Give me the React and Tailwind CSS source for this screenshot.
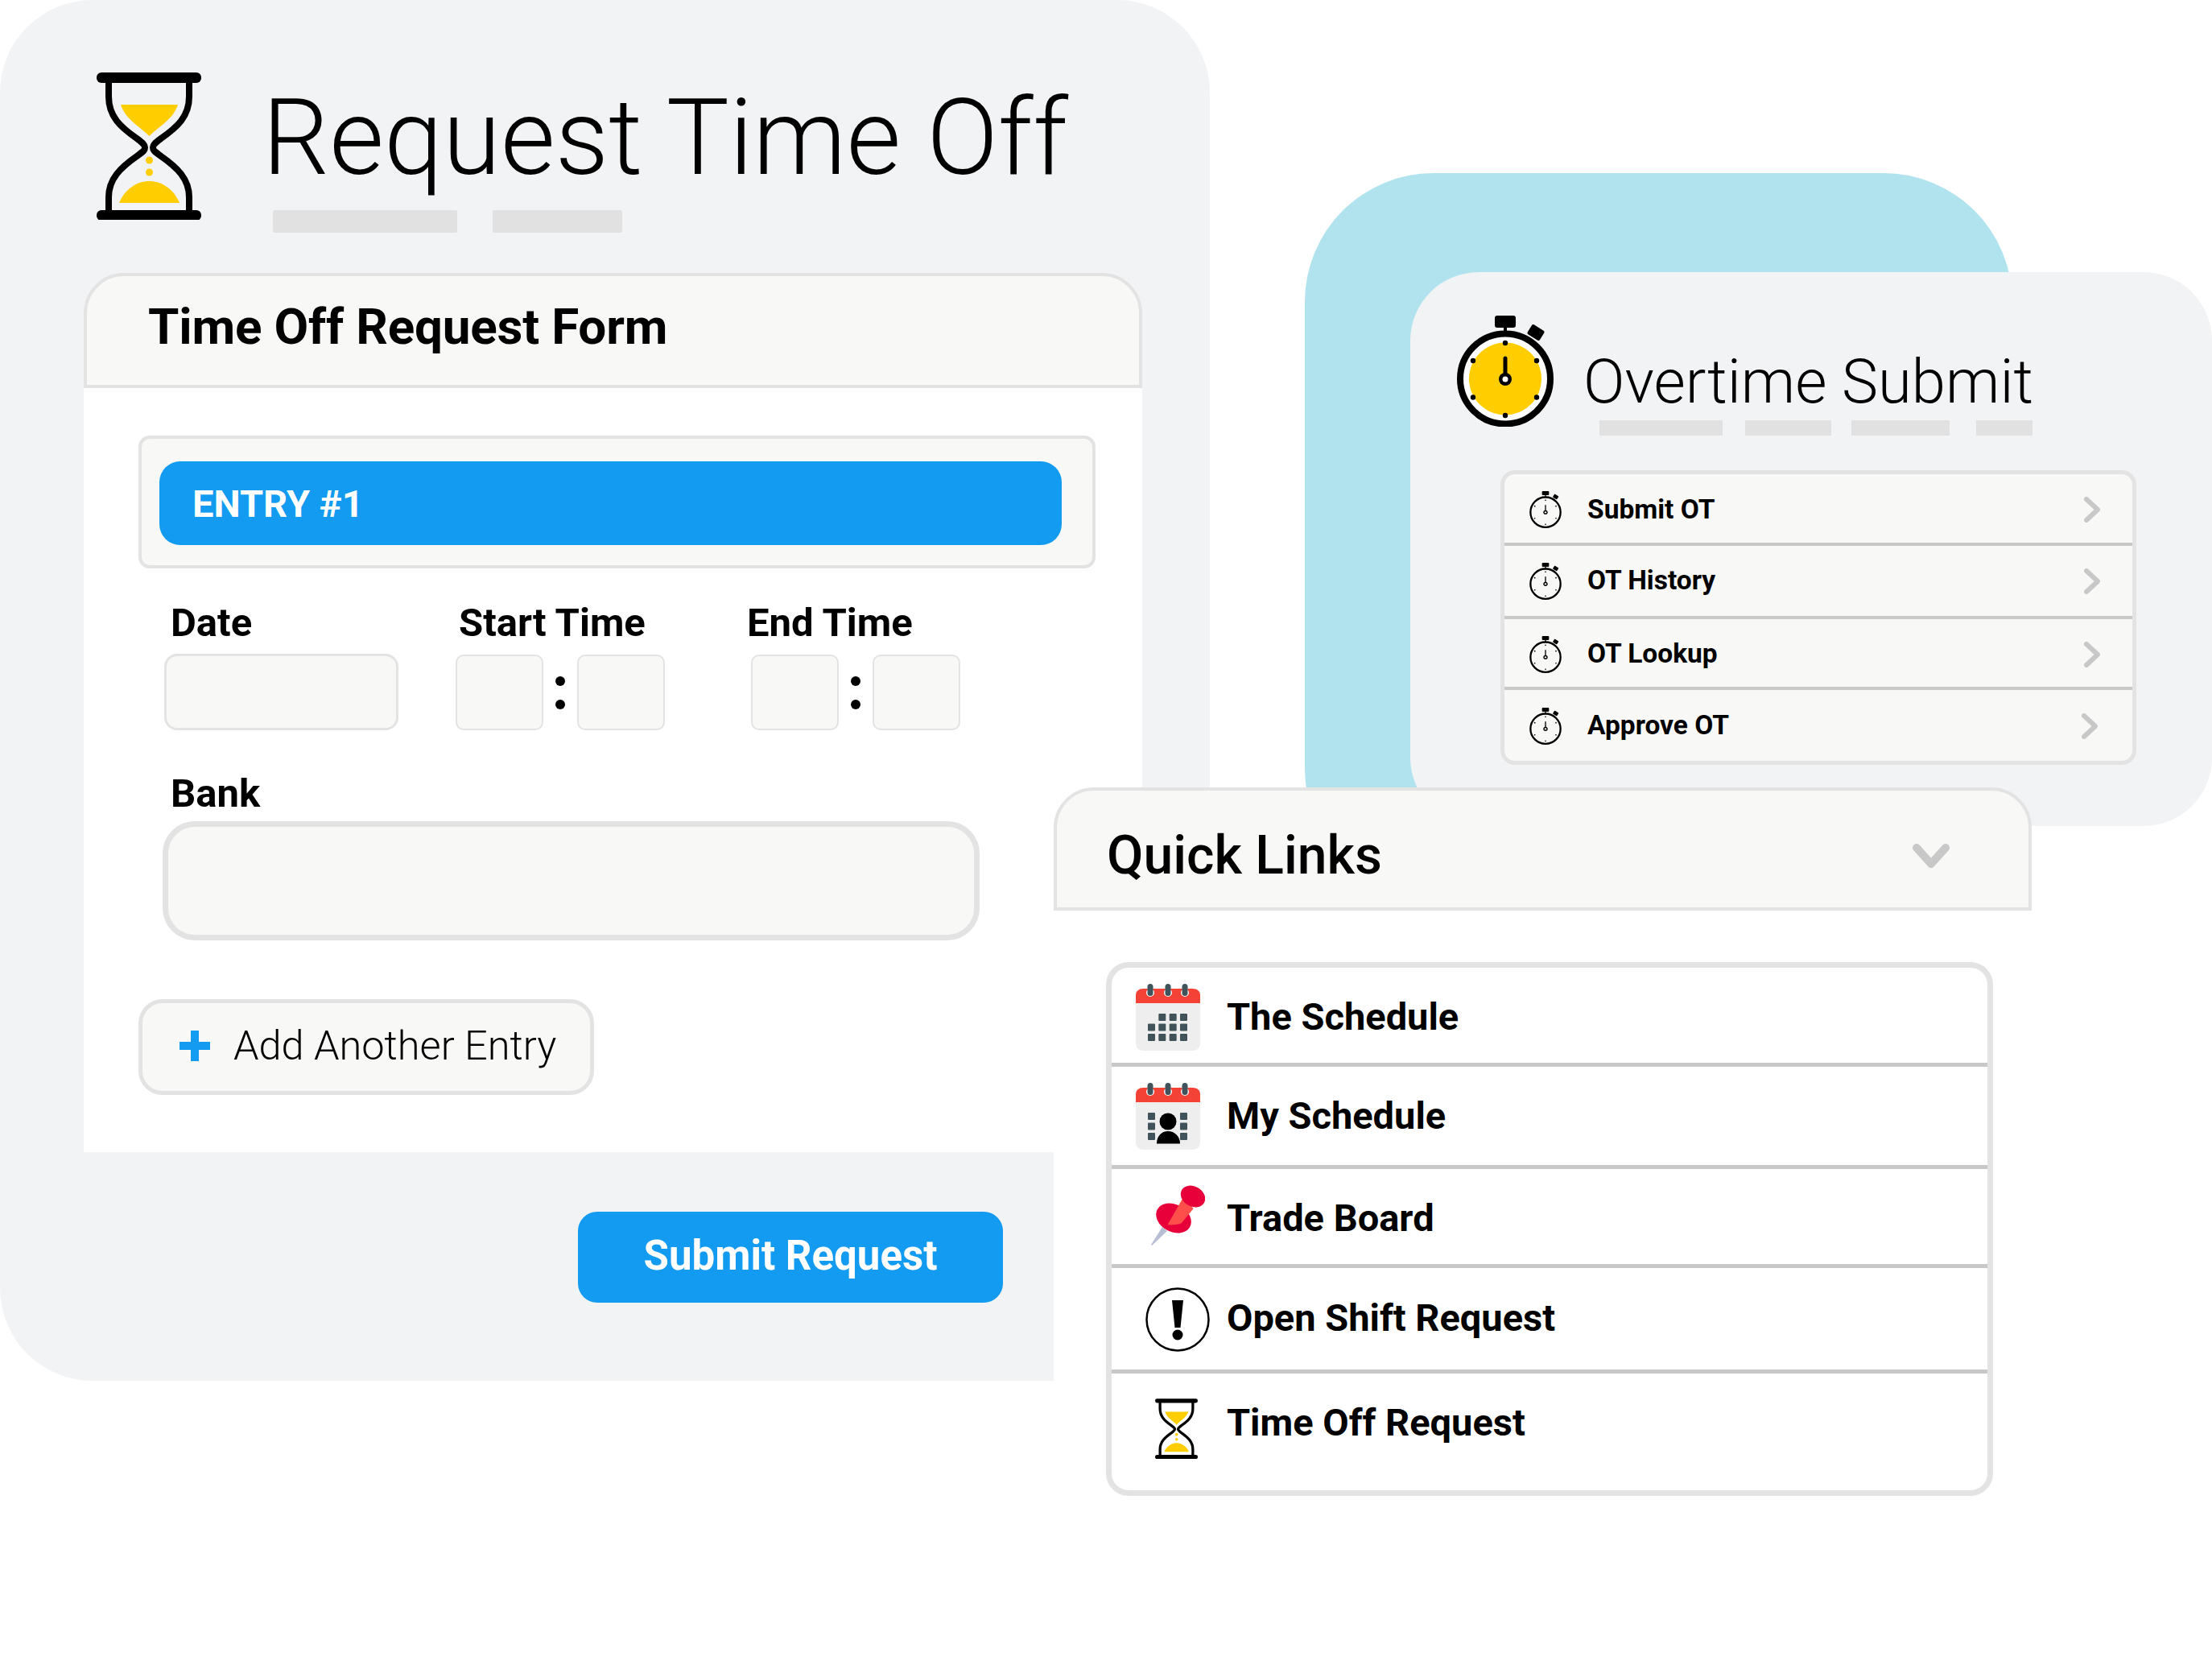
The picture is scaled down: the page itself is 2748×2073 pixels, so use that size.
import React from 'react';

const font = { fontFamily: 'Roboto, sans-serif' };

function Hourglass({ className }) {
  return (
    <svg viewBox="20 20 130 183" className={className}>
      <path d="M35 30V50C35 75 50 88 70 102C78 108 80 110 80 113C80 117 78 118 70 124C50 138 35 152 35 175V192" fill="none" stroke="#000" strokeWidth="8" />
      <path d="M135 30V50C135 75 120 88 100 102C92 108 90 110 90 113C90 117 92 118 100 124C120 138 135 152 135 175V192" fill="none" stroke="#000" strokeWidth="8" />
      <rect x="20" y="20" width="130" height="13" rx="6" fill="#000" />
      <rect x="20" y="191" width="130" height="13" rx="6" fill="#000" />
      <path d="M50 60H121C115 78 100 85 85.500 99C71 85 56 78 50 60Z" fill="#ffcd00" />
      <circle cx="85.500" cy="129" r="4.500" fill="#ffcd00" />
      <circle cx="85.500" cy="144" r="4.500" fill="#ffcd00" />
      <path d="M48 182C55 165 70 155 85.500 155C101 155 116 165 123 182Z" fill="#ffcd00" />
    </svg>
  );
}

function Stopwatch({ className, small }) {
  const ticks = [[79, 46], [79, 136], [39, 68], [118, 68], [39, 113.5], [118, 113.5]];
  return (
    <svg viewBox="19 12 120 138" className={className}>
      <rect x="66" y="12" width="26" height="15" rx="3" fill="#000" />
      <rect x="77" y="26" width="4" height="8" fill="#000" />
      <rect x="108" y="26" width="18" height="14" rx="2" transform="rotate(32 117 33)" fill="#000" />
      {small ? (
        <circle cx="79" cy="90.500" r="56" fill="none" stroke="#000" strokeWidth="7" />
      ) : (
        <>
          <circle cx="79" cy="90.500" r="56" fill="#fff" stroke="#000" strokeWidth="8" />
          <circle cx="79" cy="90.500" r="45" fill="#ffcd00" />
        </>
      )}
      {ticks.map(([x, y]) => (
        <circle key={`${x}-${y}`} cx={x} cy={y} r={small ? 2.5 : 3.2} fill="#000" />
      ))}
      <path d="M79 65V85" stroke="#000" strokeWidth={small ? 4 : 5} strokeLinecap="round" />
      <circle cx="79" cy="91" r="8" fill="#000" />
      <circle cx="79" cy="91" r="3.500" fill={small ? '#f8f8f6' : '#fff'} />
    </svg>
  );
}

function Calendar({ person }) {
  const cols = [15, 28.3, 41.7, 55];
  const rows = [37, 49.5, 62];
  return (
    <svg viewBox="0 0 80 83" className="w-[80px] h-[83px]">
      <path d="M0 24V14C0 9 4 6 9 6H71C76 6 80 9 80 14V24Z" fill="#f44336" />
      <path d="M0 24H80V74C80 79 76 83 71 83H9C4 83 0 79 0 74Z" fill="#eeeeee" />
      {[18, 40, 61].map(x => (
        <g key={x}>
          <circle cx={x} cy="11" r="5" fill="#fff" />
          <rect x={x - 3.5} y="0" width="7" height="15" rx="3.500" fill="#40525a" />
        </g>
      ))}
      {person ? (
        <>
          {[15, 55].map(x => rows.map(y => (
            <rect key={`${x}-${y}`} x={x} y={y} width="9" height="9" rx="1" fill="#40525a" />
          )))}
          <circle cx="40" cy="48" r="10.500" fill="#000" />
          <path d="M26 75.500C26 66 32 60 40 60C48 60 55 66 55 75.500Z" fill="#000" />
        </>
      ) : (
        rows.map((y, i) => cols.map((x, j) => (
          i === 0 && j === 0 ? null : <rect key={`${x}-${y}`} x={x} y={y} width="9" height="9" rx="1" fill="#40525a" />
        )))
      )}
    </svg>
  );
}

function Pin() {
  return (
    <svg viewBox="0 0 67 76" className="w-[67px] h-[76px] mt-[-5px]">
      <path d="M14 53L20 58L1 76L0 75Z" fill="#b8bfd4" />
      <ellipse cx="28" cy="42" rx="23" ry="17" transform="rotate(28 28 42)" fill="#e8003a" />
      <path d="M20.700 50L39.300 17.300L52.700 30L38 48C35 50 24 51 20.700 50Z" fill="#ff4f4a" />
      <ellipse cx="52" cy="15" rx="16" ry="12.500" transform="rotate(30 52 15)" fill="#e8003a" />
    </svg>
  );
}

function Alert() {
  return (
    <svg viewBox="0 0 80 80" className="w-[80px] h-[80px]">
      <circle cx="40" cy="40" r="38.500" fill="none" stroke="#000" strokeWidth="2.500" />
      <path d="M33 16H47L43.500 50H36.500Z" fill="#000" />
      <circle cx="40" cy="59" r="6.500" fill="#000" />
    </svg>
  );
}

function Chevron({ className }) {
  return (
    <svg viewBox="0 0 20 32" className={className}>
      <path d="M3 3L17 16L3 29" fill="none" stroke="#c8c8c8" strokeWidth="6" strokeLinecap="round" strokeLinejoin="round" />
    </svg>
  );
}

function Colon() {
  return (
    <div className="w-[42px] flex flex-col items-center gap-[17px]">
      <div className="w-[12px] h-[12px] rounded-full bg-black" />
      <div className="w-[12px] h-[12px] rounded-full bg-black" />
    </div>
  );
}

function TimeBox() {
  return <div className="w-[109px] h-[94px] bg-[#f8f8f6] border-2 border-[#e3e3e3] rounded-[10px]" />;
}

const otLinks = [
  { label: 'Submit OT', rowClass: 'h-[89px] pt-[3px]', chevronClass: 'mr-[40px]' },
  { label: 'OT History', rowClass: 'h-[91px]', chevronClass: 'mr-[40px]' },
  { label: 'OT Lookup', rowClass: 'h-[88px] pt-[3px]', chevronClass: 'mr-[40px]' },
  { label: 'Approve OT', rowClass: 'h-[87px] pt-[2px]', chevronClass: 'mr-[43px]' },
];

const quickLinks = [
  { label: 'The Schedule', rowClass: 'h-[123px] pl-[30px] pt-[4px]', iconClass: 'w-[113px]', icon: <Calendar /> },
  { label: 'My Schedule', rowClass: 'h-[127px] pl-[30px]', iconClass: 'w-[113px]', icon: <Calendar person /> },
  { label: 'Trade Board', rowClass: 'h-[123px] pl-[49px]', iconClass: 'w-[94px]', textClass: 'mt-[5px]', icon: <Pin /> },
  { label: 'Open Shift Request', rowClass: 'h-[131px] pl-[42px] pt-[2px]', iconClass: 'w-[101px]', textClass: 'mt-[-4px]', icon: <Alert /> },
  { label: 'Time Off Request', rowClass: 'h-[147px] pl-[54px] pb-[24px]', iconClass: 'w-[89px]', icon: <Hourglass className="w-[53px] h-[75px] mt-[13px]" /> },
];

function App() {
  return (
    <div className="relative w-[2748px] h-[2073px] bg-white overflow-hidden" style={font}>
      {/* blue card behind overtime panel */}
      <div className="absolute left-[1621px] top-[215px] w-[879px] h-[900px] bg-[#b1e3ee] rounded-[160px]" />

      {/* time off panel */}
      <div className="absolute left-0 top-0 w-[1503px] h-[1715px] bg-[#f2f3f5] rounded-[115px]">
        <div className="flex pl-[120px] pt-[90px]">
          <Hourglass className="w-[130px] h-[183px]" />
          <div className="ml-[76px]">
            <h1 className="mt-[11px] text-[131px] leading-[140px] font-light text-black whitespace-nowrap">Request Time Off</h1>
            <div className="flex mt-[20px] ml-[13px] gap-[44px]">
              <div className="w-[229px] h-[28px] bg-[#e1e1e1] rounded-[2px]" />
              <div className="w-[161px] h-[28px] bg-[#e1e1e1] rounded-[2px]" />
            </div>
          </div>
        </div>

        <div className="ml-[104px] mt-[50px] w-[1315px]">
          <div className="h-[143px] bg-[#f8f8f6] border-4 border-[#e3e3e3] rounded-t-[50px] pl-[76px] pt-[23px]">
            <h2 className="text-[62px] leading-[80px] font-bold tracking-[-0.2px] text-black">Time Off Request Form</h2>
          </div>
          <div className="h-[949px] bg-white pt-[59px]">
            <div className="ml-[68px] w-[1189px] h-[165px] bg-[#f8f8f6] border-4 border-[#e3e3e3] rounded-[14px] pl-[22px] pt-[28px]">
              <div className="w-[1121px] h-[104px] bg-[#129bf0] rounded-[26px] flex items-center pl-[41px] pt-[2px]">
                <span className="text-[47px] font-bold text-white">ENTRY #1</span>
              </div>
            </div>

            <div className="flex pl-[100px] mt-[37px]">
              <div className="w-[362px]">
                <div className="ml-[8px] h-[69px] pt-[1px] text-[49px] leading-[60px] font-bold text-black">Date</div>
                <div className="w-[291px] h-[95px] bg-[#f8f8f6] border-[3px] border-[#e3e3e3] rounded-[16px]" />
              </div>
              <div className="w-[367px]">
                <div className="ml-[4px] h-[70px] pt-[1px] text-[49px] leading-[60px] font-bold text-black">Start Time</div>
                <div className="flex items-center">
                  <TimeBox />
                  <Colon />
                  <TimeBox />
                </div>
              </div>
              <div>
                <div className="ml-[-5px] h-[70px] pt-[1px] text-[49px] leading-[60px] font-bold text-black">End Time</div>
                <div className="flex items-center">
                  <TimeBox />
                  <Colon />
                  <TimeBox />
                </div>
              </div>
            </div>

            <div className="ml-[98px] mt-[48px]">
              <div className="ml-[10px] h-[65px] pt-[1px] text-[49px] leading-[60px] font-bold text-black">Bank</div>
              <div className="w-[1015px] h-[148px] bg-[#f8f8f6] border-[7px] border-[#e3e3e3] rounded-[40px]" />
            </div>

            <div className="ml-[68px] mt-[73px] w-[566px] h-[119px] bg-[#f8f8f6] border-[5px] border-[#e3e3e3] rounded-[30px] flex items-center pl-[46px] pb-[4px]">
              <svg viewBox="0 0 38 38" className="w-[38px] h-[38px]">
                <rect x="14" y="0" width="10" height="38" fill="#129bf0" />
                <rect x="0" y="14" width="38" height="10" fill="#129bf0" />
              </svg>
              <span className="ml-[29px] text-[50.500px] font-light text-black whitespace-nowrap">Add Another Entry</span>
            </div>
          </div>
        </div>

        <div className="pl-[718px] pt-[74px]">
          <div className="w-[528px] h-[113px] bg-[#129bf0] rounded-[24px] flex items-center justify-center pb-[3px]">
            <span className="text-[51px] font-bold text-white">Submit Request</span>
          </div>
        </div>
      </div>

      {/* overtime panel */}
      <div className="absolute left-[1752px] top-[338px] w-[996px] h-[688px] bg-[#f2f3f5] rounded-[85px]">
        <div className="flex pl-[58px] pt-[54px]">
          <Stopwatch className="w-[120px] h-[138px]" />
          <div className="ml-[37px] mt-[37px]">
            <h2 className="text-[76px] leading-[90px] font-light text-black whitespace-nowrap">Overtime Submit</h2>
            <div className="flex mt-[3px] ml-[20px]">
              <div className="w-[153px] h-[19px] bg-[#e1e1e1]" />
              <div className="w-[107px] h-[19px] bg-[#e1e1e1] ml-[28px]" />
              <div className="w-[122px] h-[19px] bg-[#e1e1e1] ml-[25px]" />
              <div className="w-[70px] h-[19px] bg-[#e1e1e1] ml-[33px]" />
            </div>
          </div>
        </div>

        <div className="ml-[112px] mt-[43px] w-[790px] h-[366px] bg-[#f8f8f6] border-[5px] border-[#e3e3e3] rounded-[18px] divide-y-4 divide-[#c8c8c8] overflow-hidden">
          {otLinks.map(link => (
            <div key={link.label} className={`flex items-center ${link.rowClass}`}>
              <Stopwatch small className="ml-[31px] w-[40px] h-[46px]" />
              <span className="ml-[32px] text-[33.500px] font-bold text-black">{link.label}</span>
              <Chevron className={`ml-auto w-[20px] h-[32px] ${link.chevronClass}`} />
            </div>
          ))}
        </div>
      </div>

      {/* quick links */}
      <div className="absolute left-[1309px] top-[978px] w-[1215px]">
        <div className="h-[153px] bg-[#f8f8f6] border-x-4 border-t-4 border-b-4 border-[#e3e3e3] rounded-t-[50px] flex items-center pl-[62px] pt-[16px]">
          <h2 className="text-[66px] font-medium text-black">Quick Links</h2>
          <svg viewBox="0 0 46 32" className="ml-auto mr-[98px] w-[46px] h-[32px]">
            <path d="M5 6L23 26L41 6" fill="none" stroke="#c8c8c8" strokeWidth="10" strokeLinecap="round" strokeLinejoin="round" />
          </svg>
        </div>
        <div className="h-[799px] bg-white pl-[65px] pt-[64px]">
          <div className="w-[1102px] h-[663px] border-[7px] border-[#e3e3e3] rounded-[28px] divide-y-[5px] divide-[#c8c8c8] overflow-hidden">
            {quickLinks.map(link => (
              <div key={link.label} className={`flex items-center ${link.rowClass}`}>
                <div className={`shrink-0 flex items-center ${link.iconClass}`}>{link.icon}</div>
                <span className={`text-[47px] font-bold text-black ${link.textClass || ''}`}>{link.label}</span>
              </div>
            ))}
          </div>
        </div>
      </div>
    </div>
  );
}

export default App;
